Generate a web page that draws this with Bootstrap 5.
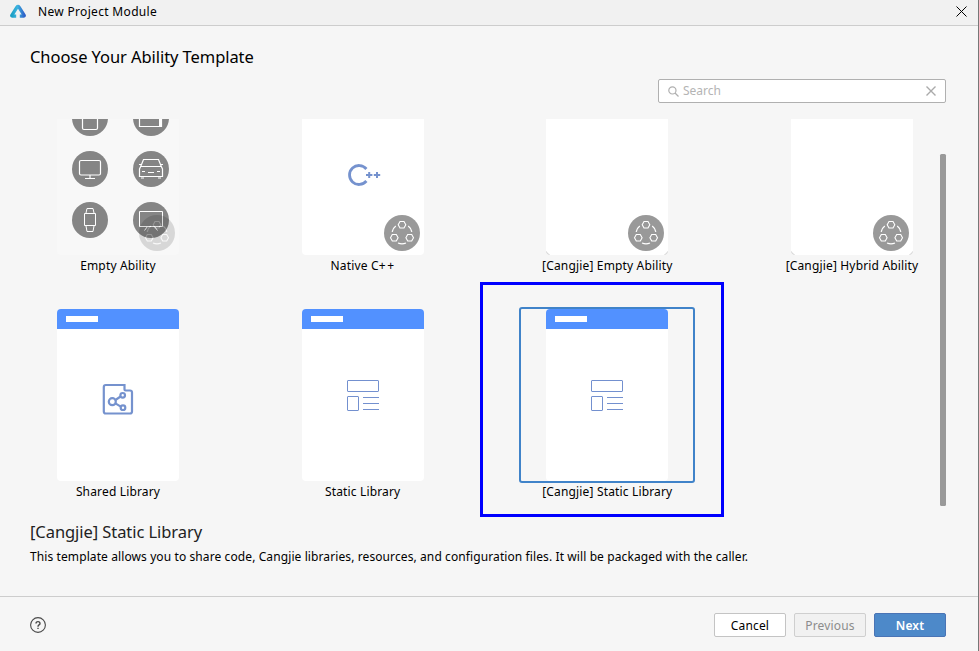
<!DOCTYPE html>
<html lang="en">
<head>
<meta charset="utf-8">
<meta name="viewport" content="width=device-width, initial-scale=1">
<title>New Project Module</title>
<link href="https://cdn.jsdelivr.net/npm/bootstrap@5.3.0/dist/css/bootstrap.min.css" rel="stylesheet">
<style>
  body { font: 12px/16px "Noto Sans", "Open Sans", sans-serif; color: #000; background: #f6f6f6; }
  .dialog-window { width: 979px; height: 651px; border-right: 1px solid #777; }
  .title-strip { height: 26px; background: #f1f1f1; border-bottom: 1px solid #cdcdcd; padding: 0 11px 2px 10px; }
  .title-text { margin-left: 12px; line-height: 22px; letter-spacing: .32px; }
  .page-title { font-size: 16.5px; line-height: 24px; padding: 19px 0 0 30px; letter-spacing: -.07px; }
  .find-box { width: 288px; height: 24px; margin: 10px 32px 0 auto; border: 1px solid #b0b0b0; border-radius: 2px; padding: 0 8px 0 9px; color: #b4b4b4; }
  .gallery { height: 402px; margin-top: 16px; padding-left: 30px; }
  .tiles { width: 910px; height: 402px; overflow: hidden; padding-bottom: 4px; }
  .tile-row { height: 226px; }
  .tile-row:first-child { margin-top: -38px; }
  .tile { width: 176px; }
  .preview { height: 176px; border: 2px solid transparent; border-radius: 3px; }
  .preview.selected { border-color: #4083c9; }
  .sheet { width: 122px; height: 172px; background: #fff; border-radius: 4px; }
  .sheet.dimmed { background: #f8f8f8; }
  .tile-label { line-height: 18px; white-space: nowrap; letter-spacing: .16px; }
  .plus-pair { letter-spacing: 1.7px; margin-right: -1px; }
  .thumb { width: 6px; height: 352px; margin-top: 35px; background: #999; border-radius: 1.5px; }
  .callout-frame { width: 244px; height: 235px; left: 480px; top: 282px; border: 3px solid #00f; }
  .summary { height: 75px; padding-left: 30px; }
  .summary-title { font-size: 16.5px; line-height: 23px; color: #222; letter-spacing: -.07px; margin-top: -1px; }
  .summary-text { line-height: 18px; margin-top: 5px; white-space: nowrap; letter-spacing: .1px; }
  .actions { height: 55px; border-top: 1px solid #cdcdcd; padding: 2px 32px 0 30px; }
  .actions .btn { width: 72px; height: 24px; padding: 0; font-size: 12px; line-height: 21px; border-radius: 2px; letter-spacing: .15px; }
  .btn-plain { background: #fff; border-color: #c4c4c4; color: #000; }
  .actions .btn-off { background: #f1f1f1; border-color: #cfcfcf; color: #8c8c8c; opacity: 1; }
  .btn-main { background: #4d89c9; border-color: #4a74b5; color: #fff; font-weight: 600; }
</style>
<script src="https://cdn.jsdelivr.net/npm/bootstrap@5.3.0/dist/js/bootstrap.bundle.min.js"></script>
</head>
<body>
<svg width="0" height="0" class="d-block" aria-hidden="true">
  <defs>
    <g id="atomic">
      <circle r="18"/>
      <g fill="none" stroke="#fff" stroke-width="1.1">
        <path id="hex" d="M-3.8-8.3-2-11.5H2L3.8-8.3 2-5H-2Z"/>
        <use href="#hex" x="-7.7" y="13"/><use href="#hex" x="7.7" y="13"/>
        <path stroke-width="1.3" d="M-9.8-1.2Q-9-5-6.2-7M9.8-1.2Q9-5 6.2-7M-4 10Q0 11.6 4 10"/>
      </g>
    </g>
    <g id="header-strip">
      <path fill="#5291ff" d="M0 20V4Q0 0 4 0H118Q122 0 122 4V20Z"/>
      <path fill="#fff" d="M9 7H41V13H9Z"/>
    </g>
    <g id="static-lib">
      <use href="#header-strip"/>
      <g fill="none" stroke="#7390cf">
        <rect x="45.5" y="71.5" width="31" height="11" rx=".5"/>
        <rect x="45.5" y="87.5" width="11" height="14" rx=".5"/>
        <path d="M61 88.5H77M61 94.5H77M61 100.5H77"/>
      </g>
    </g>
  </defs>
</svg>
<div class="dialog-window d-flex flex-column position-relative overflow-hidden">
  <header class="title-strip d-flex align-items-center flex-shrink-0">
    <svg width="16" height="16" viewBox="0 0 16 16">
      <defs><linearGradient id="lg" x1="0" x2="1"><stop offset="0" stop-color="#1c9fc4"/><stop offset=".45" stop-color="#3cb4e0"/><stop offset="1" stop-color="#2f62c8"/></linearGradient></defs>
      <path d="M6.2 12.1H2.3Q1.4 12.1 2 11.1L7 3.2Q8 1.8 9 3.2L14 11.1Q14.6 12.1 13.7 12.1H9.8" fill="none" stroke="url(#lg)" stroke-width="3.4" stroke-linejoin="round"/>
    </svg>
    <div class="title-text flex-grow-1">New Project Module</div>
    <svg width="11" height="11" viewBox="0 0 11 11"><path d="M.5.5 10.5 10.5M10.5.5.5 10.5" stroke="#000"/></svg>
  </header>
  <h1 class="page-title fw-normal m-0">Choose Your Ability Template</h1>
  <div class="find-box bg-white d-flex align-items-center flex-shrink-0">
    <svg width="11" height="11" viewBox="0 0 11 11" fill="none" stroke="#afafaf" stroke-width="1.2"><circle cx="4.4" cy="4.4" r="3.6"/><path d="M7 7 10.5 10.5"/></svg>
    <span class="flex-grow-1 ms-1">Search</span>
    <svg width="12" height="10" viewBox="0 0 12 10"><path d="M1.5.5 10.5 9.5M10.5.5 1.5 9.5" stroke="#aaa" stroke-width="1.4"/></svg>
  </div>
  <main class="gallery d-flex flex-shrink-0">
    <div class="tiles">
      <div class="tile-row d-flex justify-content-between">
        <div class="tile text-center">
          <div class="preview d-flex justify-content-center"><div class="sheet dimmed">
            <svg class="d-block" width="122" height="172" viewBox="0 0 122 172">
              <g fill="#858585"><circle cx="33" cy="35" r="18"/><circle cx="94" cy="35" r="18"/><circle cx="33" cy="86" r="18"/><circle cx="94" cy="86" r="18"/><circle cx="33" cy="137" r="18"/><circle cx="94" cy="137" r="18"/></g>
              <g fill="none" stroke="#fff" stroke-width="1.2">
                <rect x="25.5" y="24" width="15" height="22.5" rx="1.5"/>
                <path d="M82.5 26V43.5H104.5V26"/><path d="M103.2 26V43.5" stroke-width="2.4"/>
                <rect x="22.5" y="77.5" width="21" height="14.5" rx="1.5"/>
                <path d="M33 92V95M28 95.5H38"/>
                <path d="M86.5 76.5H101.5L104.3 83.5H83.7ZM83.7 83.5 82.5 86V93.5H105.5V86L104.3 83.5M82 81.5H84M104 81.5H106M84 95H87M101 95H104M85 88.5H88M91 89.5H97M100 88.5H103"/>
                <path d="M27.5 130.5H38.5V142.5H27.5ZM29 130 30 125.5H36L37 130M29 143 30 148.5H36L37 143" stroke-width="1"/>
                <path d="M82.5 128.5H105.5V143.5H82.5ZM90.5 143.5 87.5 147.5M97.5 143.5 100.5 147.5" stroke-width="1"/>
              </g>
              <use href="#atomic" x="100" y="150" fill="#000" opacity=".13"/>
            </svg>
          </div></div>
          <div class="tile-label">Empty Ability</div>
        </div>
        <div class="tile text-center">
          <div class="preview d-flex justify-content-center"><div class="sheet">
            <svg class="d-block" width="122" height="172" viewBox="0 0 122 172">
              <path d="M64.4 86A9.5 9.5 0 1 0 64.4 98" fill="none" stroke="#7592ce" stroke-width="2.8"/>
              <path d="M64 92H70.4M67.2 89V95M71.8 92H78.2M75 89V95" stroke="#7592ce" stroke-width="2"/>
              <use href="#atomic" x="100" y="150" fill="#999"/>
            </svg>
          </div></div>
          <div class="tile-label">Native C<span class="plus-pair">++</span></div>
        </div>
        <div class="tile text-center">
          <div class="preview d-flex justify-content-center"><div class="sheet">
            <svg class="d-block" width="122" height="172" viewBox="0 0 122 172">
              <path d="M.5 168.5Q.7 171.3 3.5 171.5M121.5 168.5Q121.3 171.3 118.5 171.5" fill="none" stroke="#d0d0d0"/>
              <use href="#atomic" x="100" y="150" fill="#999"/>
            </svg>
          </div></div>
          <div class="tile-label">[Cangjie] Empty Ability</div>
        </div>
        <div class="tile text-center">
          <div class="preview d-flex justify-content-center"><div class="sheet">
            <svg class="d-block" width="122" height="172" viewBox="0 0 122 172">
              <path d="M.5 168.5Q.7 171.3 3.5 171.5M121.5 168.5Q121.3 171.3 118.5 171.5" fill="none" stroke="#d0d0d0"/>
              <use href="#atomic" x="100" y="150" fill="#999"/>
            </svg>
          </div></div>
          <div class="tile-label">[Cangjie] Hybrid Ability</div>
        </div>
      </div>
      <div class="tile-row d-flex justify-content-between">
        <div class="tile text-center">
          <div class="preview d-flex justify-content-center"><div class="sheet">
            <svg class="d-block" width="122" height="172" viewBox="0 0 122 172">
              <use href="#header-strip"/>
              <g fill="none" stroke="#7592ce" stroke-width="2.2">
                <path d="M48.8 76H67.5V80.5Q67.5 81.5 68.5 81.5H73Q75 81.5 75 83.5V102.5Q75 104.5 73 104.5H48.8Q46.8 104.5 46.8 102.5V78Q46.8 76 48.8 76Z"/>
                <circle cx="55.3" cy="92.7" r="3.5"/><circle cx="65.7" cy="86.3" r="2.3"/><circle cx="66" cy="98.7" r="2.3"/>
                <path d="M58.4 91 63.6 87.5M58.4 94.4 63.8 97.6"/>
              </g>
            </svg>
          </div></div>
          <div class="tile-label">Shared Library</div>
        </div>
        <div class="tile text-center">
          <div class="preview d-flex justify-content-center"><div class="sheet">
            <svg class="d-block" width="122" height="172" viewBox="0 0 122 172"><use href="#static-lib"/></svg>
          </div></div>
          <div class="tile-label">Static Library</div>
        </div>
        <div class="tile text-center">
          <div class="preview selected d-flex justify-content-center"><div class="sheet">
            <svg class="d-block" width="122" height="172" viewBox="0 0 122 172"><use href="#static-lib"/></svg>
          </div></div>
          <div class="tile-label">[Cangjie] Static Library</div>
        </div>
        <div class="tile"></div>
      </div>
    </div>
    <div class="thumb"></div>
  </main>
  <section class="summary flex-shrink-0 d-flex flex-column">
    <h2 class="summary-title fw-normal mb-0">[Cangjie] Static Library</h2>
    <p class="summary-text mb-0">This template allows you to share code, Cangjie libraries, resources, and configuration files. It will be packaged with the caller.</p>
  </section>
  <footer class="actions d-flex align-items-center gap-2 flex-shrink-0">
    <svg class="me-auto" width="16" height="16" viewBox="0 0 16 16" fill="none" stroke="#4a4a4a"><circle cx="8" cy="8" r="7.4" stroke-width="1.1"/><path d="M6 6.6Q6 4.6 8 4.6T10 6.4Q10 7.3 9 7.9T8 9.8M8 10.7V12" stroke-width="1.4"/></svg>
    <button class="btn btn-plain" type="button">Cancel</button>
    <button class="btn btn-off" type="button" disabled>Previous</button>
    <button class="btn btn-main" type="button">Next</button>
  </footer>
  <div class="callout-frame position-absolute"></div>
</div>
</body>
</html>
